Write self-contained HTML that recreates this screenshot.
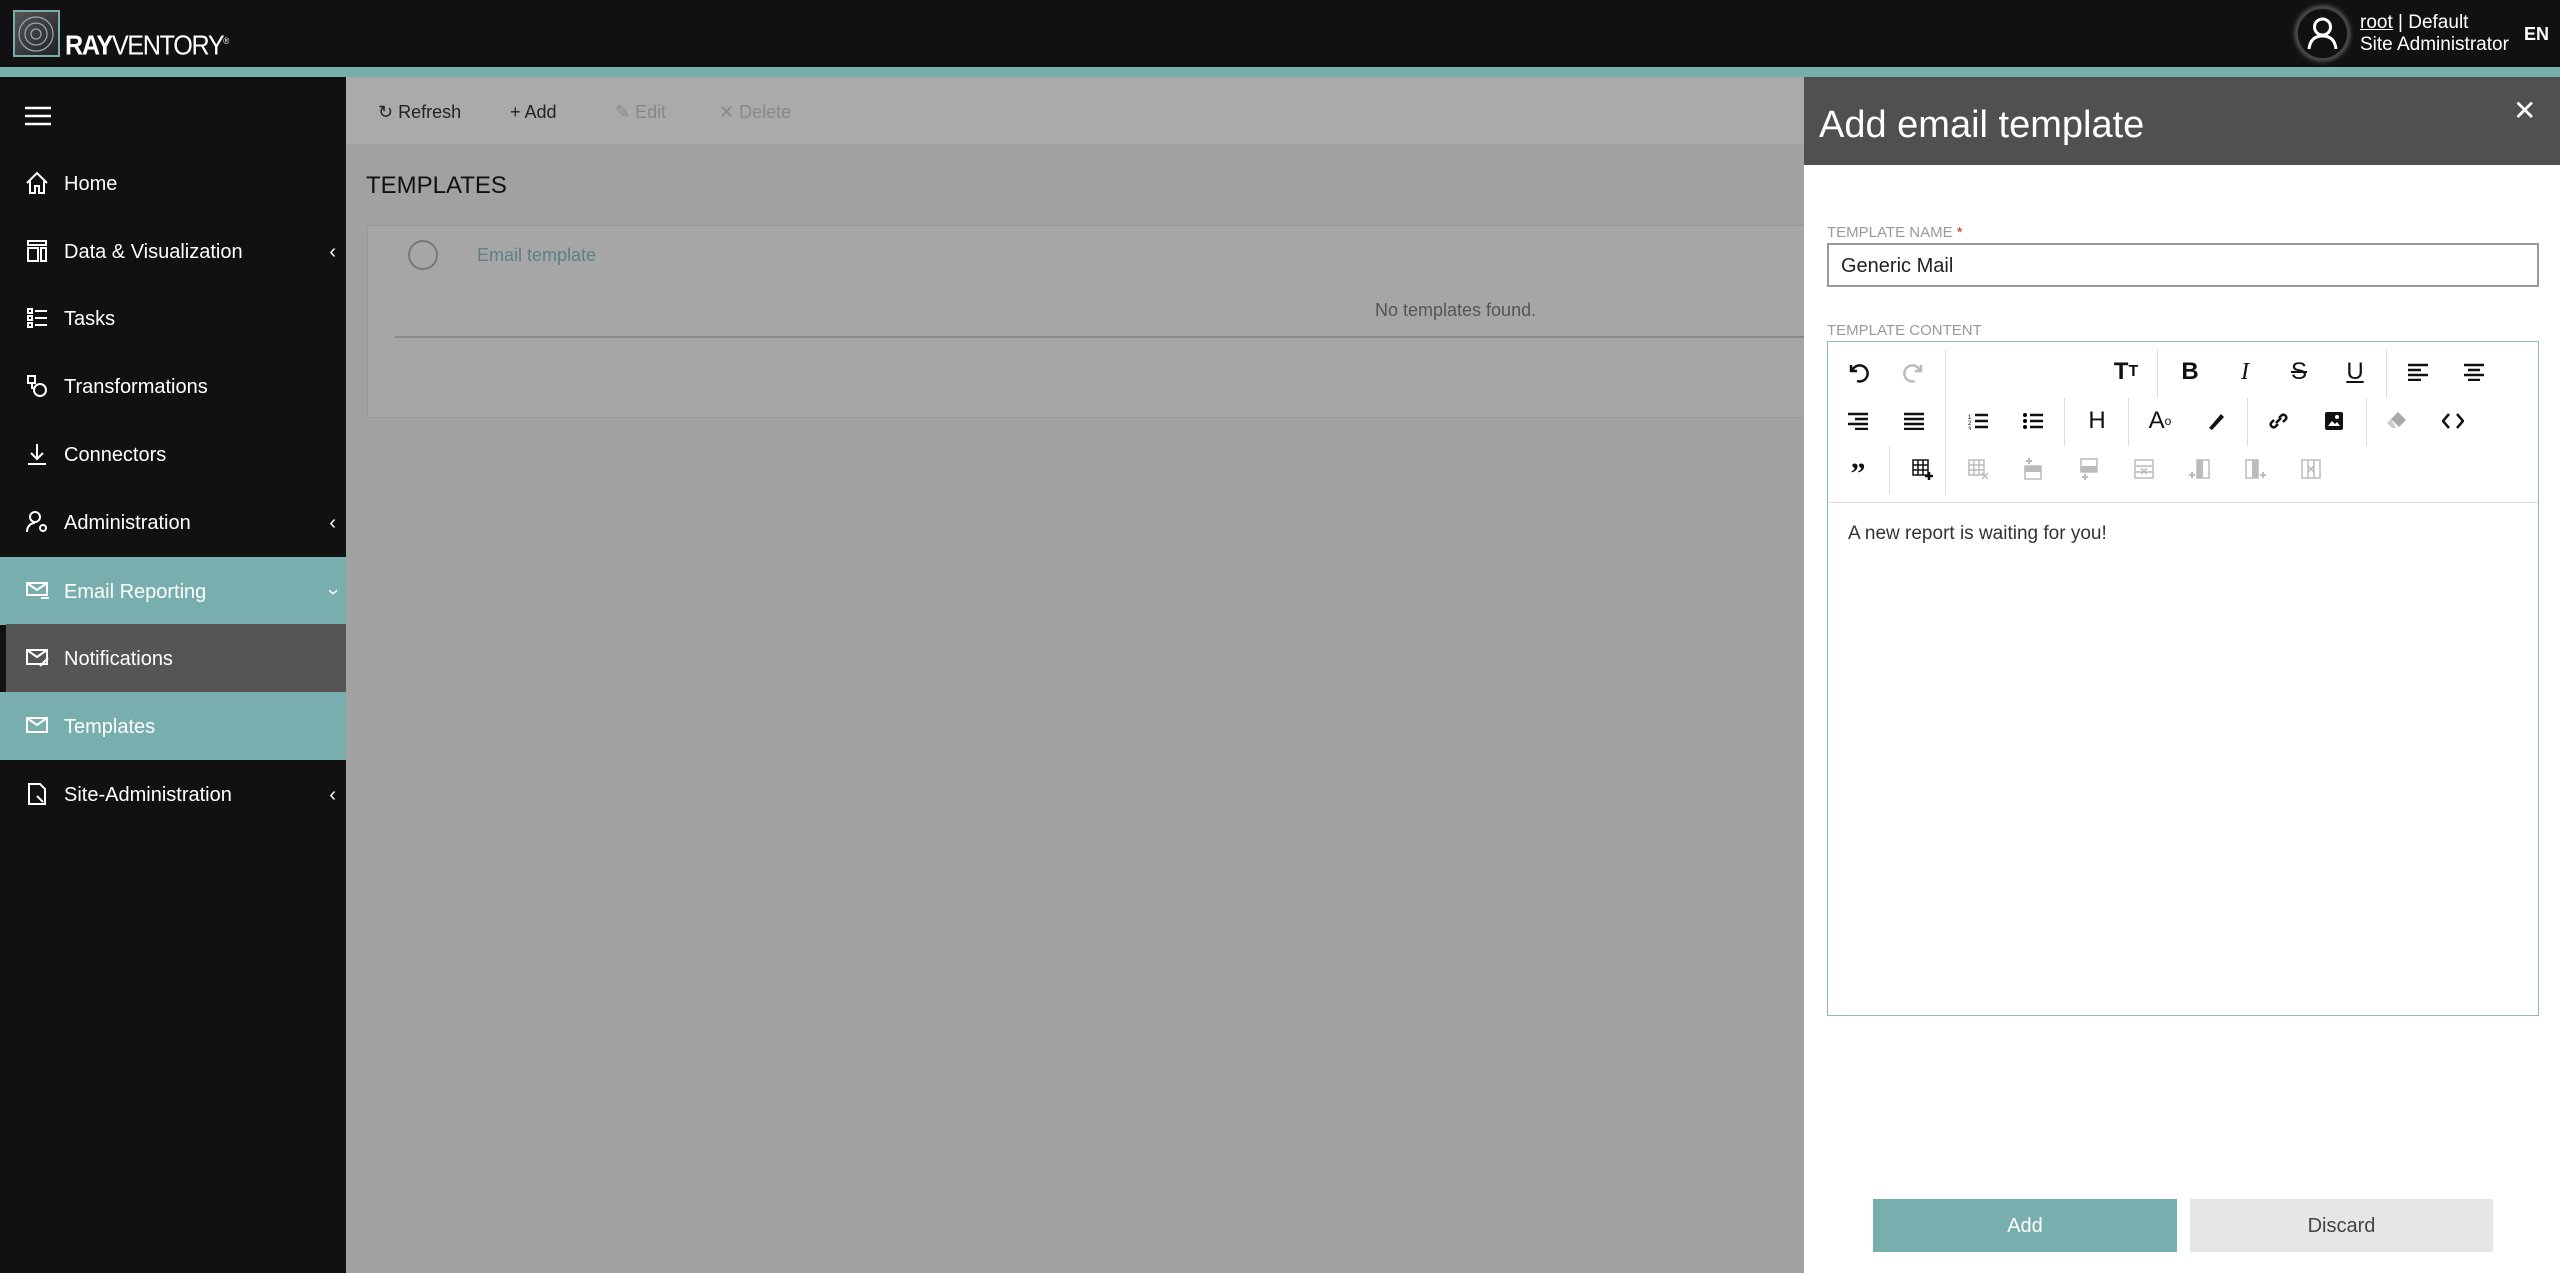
<!DOCTYPE html>
<html><head><meta charset="utf-8"><style>
*{box-sizing:border-box;margin:0;padding:0}
body{width:2560px;height:1273px;overflow:hidden;background:#a1a1a1;font-family:"Liberation Sans",sans-serif;position:relative}
.a{position:absolute}
.hdr{left:0;top:0;width:2560px;height:67px;background:#111}
.teal{left:0;top:67px;width:2560px;height:10px;background:#79aeae}
.side{left:0;top:77px;width:346px;height:1196px;background:#111}
.nav{position:absolute;left:0;width:346px;height:68px;color:#fff;font-size:20px;line-height:70px;padding-left:64px}
.nav svg{position:absolute;left:25px;top:22px}
.chev{position:absolute;right:10px;top:0;font-size:20px}
.tb{left:346px;top:77px;width:1458px;height:67px;background:#aaa}
.tbi{position:absolute;top:102px;font-size:18px;color:#222}
.ic{position:absolute;width:36px;height:36px;margin-left:-18px;margin-top:-18px;display:flex;align-items:center;justify-content:center;font-size:24px;color:#111}
.sep{position:absolute;width:1px;background:#ddd}
</style></head><body>
<div class="a hdr"></div>
<div class="a" style="left:13px;top:10px;width:47px;height:47px;border:2px solid #79aeae;background:linear-gradient(135deg,#555,#222)">
<svg width="43" height="43" viewBox="0 0 43 43"><g fill="none" stroke="#9ab" stroke-width="1.2"><circle cx="21" cy="22" r="17"/><circle cx="21" cy="22" r="11"/><circle cx="21" cy="22" r="5"/></g></svg></div>
<div class="a" style="left:65px;top:24px;color:#fff;font-size:28px;line-height:34px;letter-spacing:-1.5px;transform:scaleX(0.9);transform-origin:left"><b>RAY</b>VENTORY<sup style="font-size:9px">®</sup></div>
<div class="a" style="left:2296px;top:7px;width:53px;height:53px;border-radius:50%;background:#111;border:2px solid #444;box-shadow:0 0 6px #888">
<svg width="49" height="49" viewBox="0 0 49 49"><g fill="none" stroke="#fff" stroke-width="3"><circle cx="24.5" cy="18" r="8"/><path d="M11 40c1-9 6-13 13.5-13S37 31 38 40"/></g></svg></div>
<div class="a" style="left:2360px;top:12px;color:#fff;font-size:19px;line-height:22px"><u>root</u> | Default<br>Site Administrator</div>
<div class="a" style="left:2524px;top:24px;color:#fff;font-size:18px;font-weight:bold">EN</div>
<div class="a teal"></div>
<div class="a side">
<svg class="a" style="left:25px;top:29px" width="26" height="20"><g stroke="#fff" stroke-width="2.5"><path d="M0 2h26M0 10h26M0 18h26"/></g></svg>
</div>
<div class="a" style="left:0;top:77px;width:346px">
<div class="nav" style="top:72px"><svg width="24" height="24" fill="none" stroke="#fff" stroke-width="2"><path d="M2 12L12 2l10 10M5 10v12h5v-7h4v7h5V10"/></svg>Home</div>
<div class="nav" style="top:140px"><svg width="24" height="24" fill="none" stroke="#fff" stroke-width="2"><path d="M3 2h18v4H3zM3 9h10v13H3zM16 9h5v13h-5z"/></svg>Data &amp; Visualization<span class="chev">‹</span></div>
<div class="nav" style="top:207px"><svg width="24" height="24" fill="none" stroke="#fff" stroke-width="2"><path d="M3 3h4v4H3zM3 10h4v4H3zM3 17h4v4H3zM10 5h12M10 12h12M10 19h12"/></svg>Tasks</div>
<div class="nav" style="top:275px"><svg width="24" height="24" fill="none" stroke="#fff" stroke-width="2"><path d="M3 2h7v7H3z"/><circle cx="15" cy="16" r="6"/><path d="M7 9v5h3"/></svg>Transformations</div>
<div class="nav" style="top:343px"><svg width="24" height="24" fill="none" stroke="#fff" stroke-width="2"><path d="M12 2v15M6 11l6 6 6-6M3 22h18"/></svg>Connectors</div>
<div class="nav" style="top:411px"><svg width="24" height="24" fill="none" stroke="#fff" stroke-width="2"><circle cx="10" cy="7" r="5"/><path d="M2 22c0-6 4-9 8-9"/><circle cx="18" cy="18" r="3"/></svg>Administration<span class="chev">‹</span></div>
<div class="nav" style="top:480px;background:#79aeae"><svg width="26" height="24" fill="none" stroke="#fff" stroke-width="2"><path d="M2 4h20v12H2zM2 4l10 7 10-7M16 19h8"/></svg>Email Reporting<span class="chev" style="transform:rotate(-90deg)">‹</span></div>
<div class="nav" style="top:547px;left:6px;width:340px;padding-left:58px;background:#555"><svg style="left:19px" width="26" height="24" fill="none" stroke="#fff" stroke-width="2"><path d="M2 4h20v14H2zM2 4l10 7 10-7M15 20l8-8"/></svg>Notifications</div>
<div class="nav" style="top:615px;background:#79aeae"><svg width="26" height="24" fill="none" stroke="#fff" stroke-width="2"><path d="M2 4h20v14H2zM2 4l10 7 10-7"/></svg>Templates</div>
<div class="nav" style="top:683px"><svg width="24" height="24" fill="none" stroke="#fff" stroke-width="2"><path d="M4 2h11l5 5v15H4zM12 14l6 6"/></svg>Site-Administration<span class="chev">‹</span></div>
</div>
<div class="a tb"></div>
<div class="tbi" style="left:378px">↻ Refresh</div>
<div class="tbi" style="left:510px">+ Add</div>
<div class="tbi" style="left:615px;color:#888">✎ Edit</div>
<div class="tbi" style="left:719px;color:#888">✕ Delete</div>
<div class="a" style="left:366px;top:172px;font-size:24px;color:#111">TEMPLATES</div>
<div class="a" style="left:367px;top:225px;width:1437px;height:193px;background:#a6a6a6;border:1px solid #999;border-right:none"></div>
<div class="a" style="left:408px;top:240px;width:30px;height:30px;border-radius:50%;border:2px solid #777"></div>
<div class="a" style="left:477px;top:245px;font-size:18px;color:#5d8282">Email template</div>
<div class="a" style="left:1375px;top:300px;font-size:18px;color:#555">No templates found.</div>
<div class="a" style="left:395px;top:336px;width:1409px;height:2px;background:#8a8a8a"></div>
<!-- panel -->
<div class="a" style="left:1804px;top:77px;width:756px;height:1196px;background:#fff"></div>
<div class="a" style="left:1804px;top:77px;width:756px;height:88px;background:#505050"></div>
<div class="a" style="left:1819px;top:104px;font-size:38px;color:#fff">Add email template</div>
<div class="a" style="left:2513px;top:94px;font-size:28px;color:#fff;font-weight:lighter">✕</div>
<div class="a" style="left:1827px;top:224px;font-size:15px;color:#999">TEMPLATE NAME <span style="color:#d22">*</span></div>
<div class="a" style="left:1827px;top:243px;width:712px;height:44px;border:2px solid #999;font-size:20px;line-height:42px;padding-left:12px;color:#222">Generic Mail</div>
<div class="a" style="left:1827px;top:322px;font-size:15px;color:#999">TEMPLATE CONTENT</div>
<div class="a" style="left:1827px;top:341px;width:712px;height:675px;border:1px solid #8bbcbc"></div>
<div class="a" style="left:1828px;top:502px;width:710px;height:1px;background:#ddd"></div>
<div class="a" style="left:1848px;top:523px;font-size:19px;color:#333">A new report is waiting for you!</div>
<div class="sep" style="left:1945px;top:350px;height:145px"></div>
<div class="sep" style="left:2157px;top:350px;height:48px"></div>
<div class="sep" style="left:2386px;top:350px;height:48px"></div>
<div class="sep" style="left:2064px;top:398px;height:48px"></div>
<div class="sep" style="left:2128px;top:398px;height:48px"></div>
<div class="sep" style="left:2247px;top:398px;height:48px"></div>
<div class="sep" style="left:2366px;top:398px;height:48px"></div>
<div class="sep" style="left:1889px;top:446px;height:48px"></div>
<!-- row1 -->
<div class="ic" style="left:1858px;top:372px"><svg width="22" height="22" fill="none" stroke="#111" stroke-width="2.5"><path d="M4 4v6h6M5 10a8 8 0 1 1 5 10"/></svg></div>
<div class="ic" style="left:1914px;top:372px"><svg width="22" height="22" fill="none" stroke="#bbb" stroke-width="2.5"><path d="M18 4v6h-6M17 10a8 8 0 1 0-5 10"/></svg></div>
<div class="ic" style="left:2126px;top:372px;font-weight:bold;font-size:24px">T<span style="font-size:16px">T</span></div>
<div class="ic" style="left:2190px;top:372px;font-weight:bold">B</div>
<div class="ic" style="left:2245px;top:372px;font-style:italic;font-family:'Liberation Serif',serif">I</div>
<div class="ic" style="left:2299px;top:372px;text-decoration:line-through">S</div>
<div class="ic" style="left:2355px;top:372px;text-decoration:underline">U</div>
<div class="ic" style="left:2418px;top:372px"><svg width="20" height="18"><path d="M0 2h20M0 7h13M0 12h20M0 17h13" stroke="#111" stroke-width="2.5"/></svg></div>
<div class="ic" style="left:2474px;top:372px"><svg width="20" height="18"><path d="M0 2h20M4 7h12M0 12h20M4 17h12" stroke="#111" stroke-width="2.5"/></svg></div>
<!-- row2 -->
<div class="ic" style="left:1858px;top:421px"><svg width="20" height="18"><path d="M0 2h20M7 7h13M0 12h20M7 17h13" stroke="#111" stroke-width="2.5"/></svg></div>
<div class="ic" style="left:1914px;top:421px"><svg width="20" height="18"><path d="M0 2h20M0 7h20M0 12h20M0 17h20" stroke="#111" stroke-width="2.5"/></svg></div>
<div class="ic" style="left:1978px;top:421px"><svg width="20" height="18"><path d="M7 3h13M7 9h13M7 15h13" stroke="#111" stroke-width="2.5"/><text x="0" y="7" font-size="6">1</text><text x="0" y="13" font-size="6">2</text><text x="0" y="19" font-size="6">3</text></svg></div>
<div class="ic" style="left:2033px;top:421px"><svg width="20" height="18"><path d="M7 3h13M7 9h13M7 15h13" stroke="#111" stroke-width="2.5"/><circle cx="2" cy="3" r="2"/><circle cx="2" cy="9" r="2"/><circle cx="2" cy="15" r="2"/></svg></div>
<div class="ic" style="left:2097px;top:421px">H</div>
<div class="ic" style="left:2160px;top:421px">A<sup style="font-size:12px">o</sup></div>
<div class="ic" style="left:2216px;top:421px"><svg width="20" height="20"><path d="M3 17L15 3l3 3L6 19z" fill="#111"/></svg></div>
<div class="ic" style="left:2278px;top:421px"><svg width="22" height="22" fill="none" stroke="#111" stroke-width="2.5"><path d="M9 13l5-5M7 10l-3 3a3 3 0 004 4l3-3M12 8l3-3a3 3 0 014 4l-3 3"/></svg></div>
<div class="ic" style="left:2334px;top:421px"><svg width="20" height="20"><rect x="1" y="1" width="18" height="18" rx="2" fill="#111"/><path d="M4 15l4-5 3 3 2-2 3 4z" fill="#fff"/><circle cx="13" cy="6" r="2" fill="#fff"/></svg></div>
<div class="ic" style="left:2397px;top:421px"><svg width="22" height="20"><path d="M12 1l8 8-7 7-8-8z" fill="#aaa"/><path d="M5 8l-4 4 5 5 4 0z" fill="#ccc"/></svg></div>
<div class="ic" style="left:2453px;top:421px"><svg width="22" height="20" fill="none" stroke="#111" stroke-width="2.5"><path d="M7 3L1 10l6 7M15 3l6 7-6 7"/></svg></div>
<!-- row3 -->
<div class="ic" style="left:1858px;top:469px;font-weight:bold;font-size:30px;font-family:'Liberation Serif',serif;padding-top:10px">”</div>
<div class="ic" style="left:1922px;top:469px"><svg width="22" height="22" fill="none" stroke="#111" stroke-width="1.5"><path d="M2 2h15v15H2zM2 7h15M2 12h15M7 2v15M12 2v15"/><path d="M18 14v8M14 18h8" stroke-width="2.5"/></svg></div>
<div class="ic" style="left:1978px;top:469px"><svg width="22" height="22" fill="none" stroke="#bbb" stroke-width="1.5"><path d="M2 2h15v15H2zM2 7h15M2 12h15M7 2v15M12 2v15M15 15l6 6M21 15l-6 6"/></svg></div>
<div class="ic" style="left:2033px;top:469px"><svg width="20" height="22"><rect x="2" y="8" width="16" height="13" fill="none" stroke="#bbb" stroke-width="1.5"/><rect x="2" y="8" width="16" height="6" fill="#bbb"/><path d="M6 0v6M3 3h6" stroke="#bbb" stroke-width="2"/></svg></div>
<div class="ic" style="left:2089px;top:469px"><svg width="20" height="22"><rect x="2" y="1" width="16" height="13" fill="none" stroke="#bbb" stroke-width="1.5"/><rect x="2" y="8" width="16" height="6" fill="#bbb"/><path d="M6 16v6M3 19h6" stroke="#bbb" stroke-width="2"/></svg></div>
<div class="ic" style="left:2144px;top:469px"><svg width="22" height="22" fill="none" stroke="#bbb" stroke-width="1.5"><path d="M2 2h18v18H2zM2 8h18M2 14h18M8 10l6 6M14 10l-6 6"/></svg></div>
<div class="ic" style="left:2200px;top:469px"><svg width="22" height="22"><rect x="8" y="2" width="12" height="18" fill="none" stroke="#bbb" stroke-width="1.5"/><rect x="8" y="2" width="6" height="18" fill="#bbb"/><path d="M0 17h6M3 14v6" stroke="#bbb" stroke-width="2"/></svg></div>
<div class="ic" style="left:2255px;top:469px"><svg width="22" height="22"><rect x="2" y="2" width="12" height="18" fill="none" stroke="#bbb" stroke-width="1.5"/><rect x="8" y="2" width="6" height="18" fill="#bbb"/><path d="M16 17h6M19 14v6" stroke="#bbb" stroke-width="2"/></svg></div>
<div class="ic" style="left:2311px;top:469px"><svg width="22" height="22" fill="none" stroke="#bbb" stroke-width="1.5"><path d="M2 2h18v18H2zM8 2v18M14 2v18M8 8l6 6M14 8l-6 6"/></svg></div>
<div class="a" style="left:1873px;top:1199px;width:304px;height:53px;background:#79aeae;color:#fff;font-size:20px;line-height:55px;text-align:center">Add</div>
<div class="a" style="left:2190px;top:1199px;width:303px;height:53px;background:#e6e6e6;color:#444;font-size:20px;line-height:55px;text-align:center">Discard</div>
</body></html>
